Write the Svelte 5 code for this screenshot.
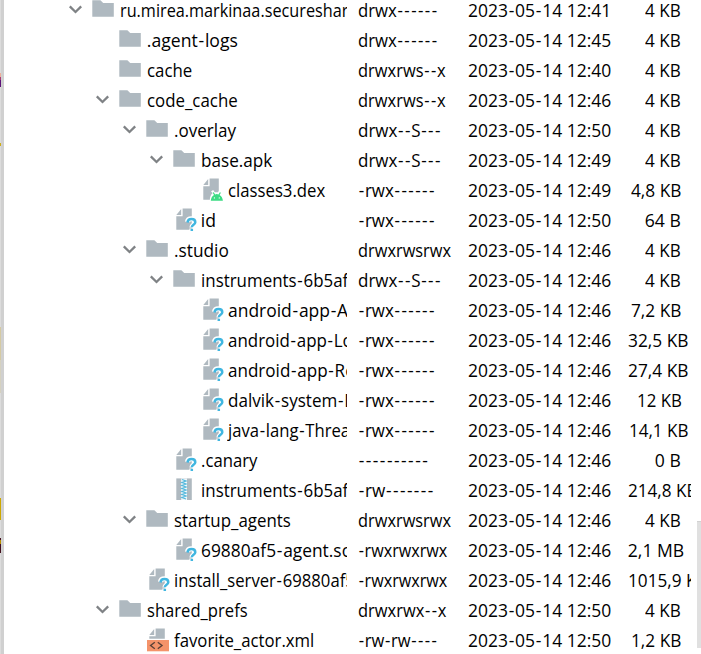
<script>
  const D1 = '2023-05-14 ';
  // level, kind, open, name, name width, permissions, permissions width, time, size, size left, size width
  const rows = [
    [0, 'folder', 1, 'ru.mirea.markinaa.secureshar', 227, 'drwx------', 79, '12:41', '4 KB', 645, 35],
    [1, 'folder', 0, '.agent-logs', 90, 'drwx------', 79, '12:45', '4 KB', 645, 35],
    [1, 'folder', 0, 'cache', 44, 'drwxrws--x', 87, '12:40', '4 KB', 645, 35],
    [1, 'folder', 1, 'code_cache', 90, 'drwxrws--x', 87, '12:46', '4 KB', 645, 35],
    [2, 'folder', 1, '.overlay', 61, 'drwx--S---', 82, '12:50', '4 KB', 645, 35],
    [3, 'folder', 1, 'base.apk', 70, 'drwx--S---', 82, '12:49', '4 KB', 645, 35],
    [4, 'dex', 0, 'classes3.dex', 96, '-rwx------', 76, '12:49', '4,8 KB', 631, 49],
    [3, 'file', 0, 'id', 14, '-rwx------', 76, '12:50', '64 B', 645, 35],
    [2, 'folder', 1, '.studio', 54, 'drwxrwsrwx', 92, '12:46', '4 KB', 645, 35],
    [3, 'folder', 1, 'instruments-6b5af', 146, 'drwx--S---', 82, '12:46', '4 KB', 645, 35],
    [4, 'file', 0, 'android-app-A', 119, '-rwx------', 76, '12:46', '7,2 KB', 631, 49],
    [4, 'file', 0, 'android-app-Lo', 124, '-rwx------', 76, '12:46', '32,5 KB', 628, 59],
    [4, 'file', 0, 'android-app-Re', 126, '-rwx------', 76, '12:46', '27,4 KB', 628, 59],
    [4, 'file', 0, 'dalvik-system-D', 128, '-rwx------', 76, '12:46', '12 KB', 637, 44],
    [4, 'file', 0, 'java-lang-Threa', 121, '-rwx------', 76, '12:46', '14,1 KB', 629, 58],
    [3, 'file', 0, '.canary', 55, '----------', 70, '12:46', '0 B', 655, 25],
    [3, 'zip', 0, 'instruments-6b5af', 146, '-rw-------', 75, '12:46', '214,8 KB', 628, 69],
    [2, 'folder', 1, 'startup_agents', 116, 'drwxrwsrwx', 92, '12:46', '4 KB', 645, 35],
    [3, 'file', 0, '69880af5-agent.so', 150, '-rwxrwxrwx', 88, '12:46', '2,1 MB', 628, 55],
    [2, 'file', 0, 'install_server-69880af5', 180, '-rwxrwxrwx', 88, '12:46', '1015,9 KB', 628, 79],
    [1, 'folder', 1, 'shared_prefs', 100, 'drwxrwx--x', 87, '12:50', '4 KB', 645, 35],
    [2, 'xml', 0, 'favorite_actor.xml', 139, '-rw-rw----', 79, '12:50', '1,2 KB', 631, 49]
  ];

  const runs = (s) => s.match(/-+|[^-]+/g);

  function fit(node, width) {
    const natural = node.offsetWidth;
    node.style.transform = `scaleX(${(width + 1) / natural})`;
  }
</script>

{#snippet label(text, width)}
  <span class="label" use:fit={width}>{#each runs(text) as r}<span class:dash={r[0] === '-'}>{r}</span>{/each}</span>
{/snippet}

{#snippet page()}
  <path d="M9.6 2.4H18.8V23.7H3.3V10.3H9.6Z" fill="#afb9c0" />
  <path d="M8.2 3.1V8.9H3.3Z" fill="#afb9c0" />
{/snippet}

<div class="window">
  <div class="edge">
    <i style="height:73px"></i>
    <i style="height:4px;background:#efb09a"></i>
    <i style="height:3px;background:#a83d75"></i>
    <i style="height:7px;background:#5c1278"></i>
    <i style="height:56px"></i>
    <i style="height:3px;background:#cfae18"></i>
    <i style="height:181px"></i>
    <i style="height:33px;background:#d5caa3"></i>
    <i style="height:33px;background:#d5d1c0"></i>
    <i style="height:105px"></i>
    <i style="height:22px;background:#cda800"></i>
    <i style="height:18px"></i>
    <i style="height:2px;background:#43101d"></i>
    <i style="height:4px;background:#b89000"></i>
    <i style="height:9px;background:#43101d"></i>
  </div>
  <div class="bar"></div>
  <div class="tree">
    {#each rows as [level, kind, open, name, nw, perm, pw, time, size, sx, sw]}
      <div class="row">
        <div class="name" style="padding-left:{61 + level * 27}px">
          <svg class="arrow" width="27" height="30" viewBox="0 0 27 30">
            {#if open}<path d="M4.8 10.4L10.5 16L16.2 10.4" fill="none" stroke="#7f8285" stroke-width="2.3" />{/if}
          </svg>
          <svg class="icon" width="28" height="30" viewBox="0 0 28 30">
            {#if kind === 'folder'}
              <path d="M.3 4.3H8.4L11.2 7H21.8V20.8H.3Z" fill="#afb9c0" />
            {:else if kind === 'zip'}
              <path d="M3.3 2.4H18.8V24H3.3Z" fill="#afb9c0" />
              <path d="M8.2 2.4H14V24H8.2Z" fill="#f0f7fa" />
              <path d="M9 3.5L13 5L9 6.5L13 8L9 9.5L13 11L9 12.5L13 14L9 15.5L13 17L9 18.5L13 20L9 21.5L13 23" fill="none" stroke="#55b8dc" stroke-width="1.3" />
            {:else if kind === 'xml'}
              <path d="M9.6 2.4H18.8V12.7H3.3V10.3H9.6Z" fill="#afb9c0" />
              <path d="M8.2 3.1V8.9H3.3Z" fill="#afb9c0" />
              <rect x="1" y="14" width="22" height="11.3" fill="#f4936a" />
              <path d="M8.8 16.2L4.6 19.5L8.8 22.8M11.8 16.2L16 19.5L11.8 22.8" fill="none" stroke="#5c4138" stroke-width="1.4" />
            {:else if kind === 'dex'}
              {@render page()}
              <path d="M9.8 24.8C9.8 20.7 11 18.4 12.6 17.3L11 15.2L13.2 14L14.7 16.2H17.8L20 14V24.8Z" fill="#fff" />
              <path d="M10.8 24.8C11 21.9 12.1 20 14 18.9L12.7 16.8L13.7 16.2L15.1 18.4Q16.8 17.8 18.5 18.4L19.9 16.2L20.9 16.8L19.6 18.9C21.5 20 22.7 21.9 22.9 24.8Z" fill="#3ddc84" />
              <circle cx="14.4" cy="21.9" r=".65" fill="#fff" /><circle cx="19.3" cy="21.9" r=".65" fill="#fff" />
            {:else}
              {@render page()}
              <path d="M14.4 15.9C14.7 13.8 16.2 12.8 18.5 12.8C21.1 12.8 22.5 14.2 22.5 16.1C22.5 19 18.9 18.6 18.9 21.4M18.9 22.6V25" fill="none" stroke="#fff" stroke-width="5" />
              <path d="M14.5 16.5C14.8 14.3 16.2 13.1 18.4 13.1C20.8 13.1 22.3 14.4 22.3 16.3C22.3 18.8 18.8 18.8 18.8 21.2M18.8 22.7V25.1" fill="none" stroke="#40b6e0" stroke-width="2.5" />
            {/if}
          </svg>
          {@render label(name, nw)}
        </div>
        <div class="perm">{@render label(perm, pw)}</div>
        <div class="date">{@render label(D1 + time, 142)}</div>
        <div class="size" style="padding-left:{sx - 625.2}px">{@render label(size, sw)}</div>
      </div>
    {/each}
  </div>
  <div class="scroll"></div>
</div>

<style>
  :global(body) { background: #fff; overflow: hidden; }
  .window { display: flex; width: 701px; height: 654px; overflow: hidden; background: #fff; }
  .edge { width: 1px; background: #dcdcdc; flex: none; }
  .edge i { display: block; }
  .bar { width: 3px; background: #d0d0d0; flex: none; }
  .tree { width: 687px; flex: none; margin-top: -4px; }
  .row {
    display: flex;
    height: 30px;
    font: 17.6px/28px "Open Sans", "Noto Sans", sans-serif;
    color: #000;
    white-space: pre;
  }
  .name { display: flex; width: 343px; box-sizing: border-box; overflow: hidden; flex: none; }
  .arrow { flex: none; }
  .icon { flex: none; margin-right: -.2px; }
  .perm { width: 109px; padding-left: 10.8px; box-sizing: border-box; flex: none; }
  .date { width: 169px; padding-left: 11.8px; box-sizing: border-box; flex: none; }
  .size { width: 66px; box-sizing: border-box; overflow: hidden; flex: none; }
  .label { display: inline-block; flex: none; transform-origin: 0 50%; }
  .dash { letter-spacing: 1.5px; margin: 0 -.7px 0 .7px; }
  .scroll { width: 4px; height: 127px; margin: 521px 0 0 6px; background: #e0e0e0; border-top: 1px solid #d2d2d2; box-sizing: border-box; flex: none; }
</style>
